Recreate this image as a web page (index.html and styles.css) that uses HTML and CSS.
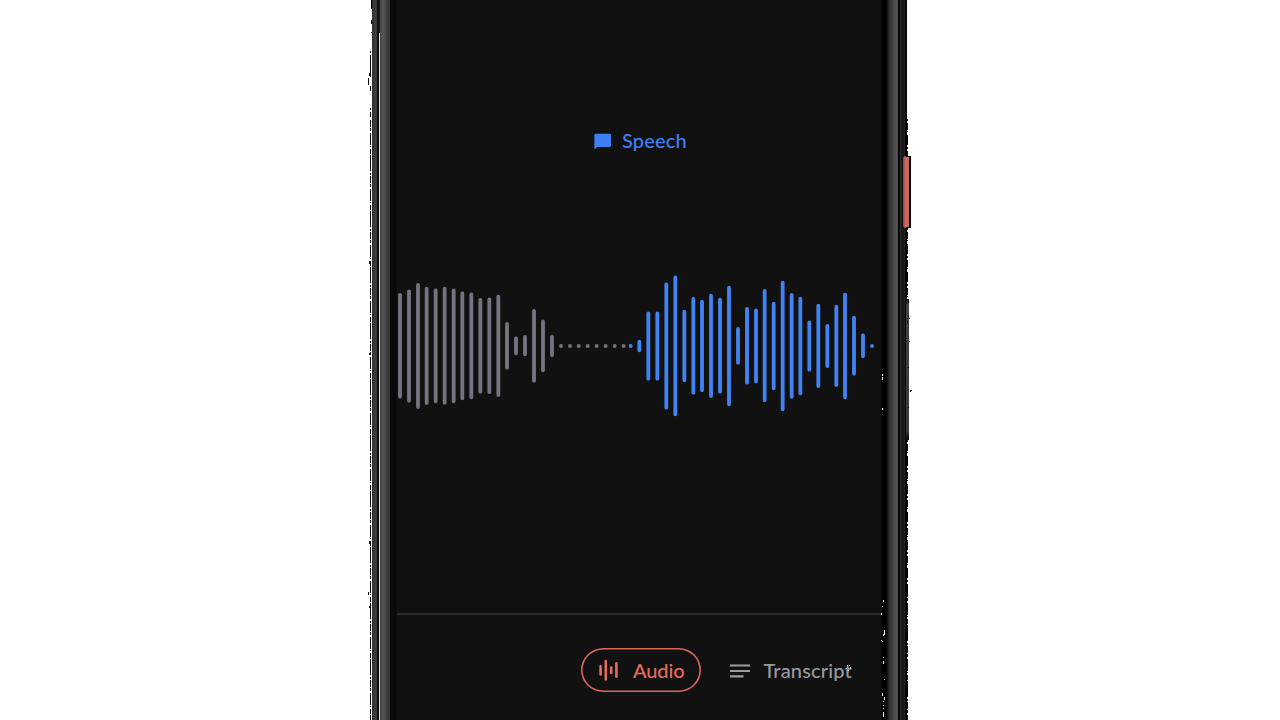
FILE: index.html
```html
<!DOCTYPE html>
<html lang="en">
<head>
<meta charset="utf-8">
<title>Recorder</title>
<link rel="stylesheet" href="styles.css">
</head>
<body>
<main class="phone">
  <div class="case case-left"></div>
  <section class="screen">
    <header class="label">
      <svg class="bubble" viewBox="0 0 18 18"><path fill="currentColor" d="M1.8.8h13.8Q17 .8 17 2.2v10.4q0 1.4-1.4 1.4H3.2L.4 16.8V2.2Q.4.8 1.8.8z"/></svg>
      <span class="label-text">Speech</span>
    </header>
    <svg class="wave" viewBox="21 0 1452 480">
      <path class="past" d="M30 90V395M57 79V407M84 60V426M110 71V414M137 76V409M164 71V413M191 76V409M217 85V400M244 88V397M271 105V380M298 103V381M325 95V390M351 177V308M378 220V265M405 216V268M432 138V347M459 169V316M486 215V271M513 243h.1M540 243h.1M566 243h.1M593 243h.1M620 243h.1M647 243h.1M674 243h.1M701 243h.1"/>
      <path class="live" d="M722 243h.1M748 230V256M775 145V341M802 145V341M829 58V428M856 37V448M883 140V346M910 102V383M936 110V376M963 92V393M990 104V380M1017 68V418M1044 192V293M1071 132V353M1098 136V349M1124 78V406M1151 116V370M1178 53V433M1205 90V395M1231 101V385M1258 172V314M1285 122V363M1312 183V303M1339 125V360M1365 89V397M1392 158V326M1419 211V274M1446 243h.1"/>
    </svg>
    <nav class="tabs">
      <button class="tab audio">
        <svg class="audio-icon" viewBox="0 0 20 22"><path d="M1.6 7.2v8.2M6.8 2v18.4M12.2 8.5v5.5M17.4 4.3v13.4"/></svg>
        <span class="tab-text">Audio</span>
      </button>
      <button class="tab transcript">
        <svg class="lines-icon" viewBox="0 0 20 14"><path d="M0 1.5h20M0 7h20M0 12.4h13.5"/></svg>
        <span class="tab-text wide">Transcript</span>
      </button>
    </nav>
  </section>
  <div class="case case-right"></div>
  <div class="power"></div>
  <div class="volume"></div>
  <svg class="grain" viewBox="0 0 560 720">
    <path class="seam" d="M19.5 0V33"/>
    <path class="dark" d="M11.5 0v9M11.5 20v4M11.5 32v1M10.5 51v2M10.5 55v22M9.5 73v3M8.5 78v7M10.5 86v5M10.5 108v2M10.5 112v5"/>
    <path class="dark dash-a" d="M10.5 120V720"/>
    <path class="dark" d="M9.5 261v3M8.5 592v3M9.5 606v2M9.5 541v3M9.5 353v2M18.5 32v3M18.5 38v2M18.5 45v2"/>
    <path class="dark dash-b" d="M547.5 119V156M547.5 228V298M547.5 440V590"/>
    <path class="dark dash-a" d="M547.5 590V720"/>
    <path class="dark" d="M546 156.5h5M550.5 157v70M546 227.5h5M548.5 299v4M547.5 321v2M549.5 318v1M549.5 341v1M548.5 367v1M550 390.5h2M550.5 391v1M548.5 407v1M548.5 436v4"/>
    <path class="light" d="M522.5 374v2M522.5 377v3M522.5 408v2M523.5 600v2M522.5 606v1M521.5 613v2M524.5 630v5M523.5 634v2M521.5 640v1M522.5 641v1M523.5 657v1M523.5 661v3M524.5 679v1M522.5 693v3M524.5 697v3M523.5 701v1M523.5 705v1M523.5 708v1M523.5 712v5M487.5 665v1M489.5 665v1M490.5 667v2M486.5 668v1M488.5 670v1"/>
  </svg>
</main>
</body>
</html>
```
FILE: styles.css
```css
body {
  margin: 0;
  background: #fff;
  font-family: Lato, "Open Sans", sans-serif;
}
.phone {
  position: relative;
  display: flex;
  width: 535px;
  height: 720px;
  margin-left: 372px;
}
.case-left {
  width: 25px;
  background: linear-gradient(90deg,
    #292a29 0, #3c3d3c 2px, #333 3px, #454645 4px, #222 5px, #080808 6px,
    #080808 7px, #ddd 7px, #ddd 8px, #414241 8px, #555655 11px,
    #444544 14px, #303130 18px, #0b0c0b 18px, #070807 24px, #0e0f0e 25px);
}
.case-right {
  width: 26px;
  background: linear-gradient(90deg,
    #0b0b0b 0, #010101 2px, #010101 5px, #151615 7px, #2b2c2b 8px,
    #3b3c3b 11px, #555655 16px, #434443 17px, #070707 17px, #070707 19px,
    #303130 19px, #292a29 20px, #111 21px, #111 22px, #242524 23px,
    #1b1c1b 24px, #050505 24px, #050505 26px);
}
.screen {
  display: flex;
  flex-direction: column;
  width: 484px;
  background: #111;
}
.label {
  display: flex;
  align-items: center;
  height: 28px;
  margin-top: 126px;
  padding-left: 197px;
  color: #3d80f5;
}
.bubble {
  width: 18px;
  height: 18px;
  margin: 4px 10px 0 0;
}
.label-text {
  font-size: 20px;
  font-weight: 500;
  line-height: 28px;
  letter-spacing: .15px;
}
.wave {
  width: 484px;
  height: 160px;
  margin-top: 111px;
}
.past, .live {
  fill: none;
  stroke-width: 11.5;
  stroke-linecap: round;
}
.past { stroke: #75737f; }
.live { stroke: #4283f2; }
.tabs {
  display: flex;
  box-sizing: border-box;
  height: 107px;
  margin-top: auto;
  padding: 34px 0 0 184px;
  border-top: 2px solid #2a2b2b;
}
.tab {
  display: flex;
  align-items: center;
  box-sizing: border-box;
  height: 44px;
  padding: 0;
  border: 0;
  background: none;
  font: 500 20px/28px Lato, "Open Sans", sans-serif;
}
.tabs { padding-top: 33px; }
.audio {
  width: 120px;
  padding-left: 0;
  color: #e66c61;
  border-radius: 22px;
  box-shadow: inset 0 0 0 1.6px #dc665c;
}
.audio-icon {
  width: 20px;
  height: 22px;
  margin: 0 14px 0 18px;
}
.audio-icon path, .lines-icon path {
  fill: none;
  stroke: currentColor;
}
.audio-icon path {
  stroke-width: 2.6;
  stroke-linecap: round;
}
.tab-text { margin-top: -1px; letter-spacing: -.1px; }
.wide { letter-spacing: .15px; }
.lines-icon path { stroke-width: 2.1; }
.transcript {
  margin-left: 28px;
  color: #9a9b9e;
}
.lines-icon {
  width: 20px;
  height: 14px;
  margin: 1px 14px 0 .5px;
}
.power {
  position: absolute;
  left: 531px;
  top: 156px;
  width: 7px;
  height: 72px;
  border-right: 1px solid #050505;
  box-sizing: border-box;
  border-radius: 3px 1px 1px 3px;
  background: linear-gradient(90deg, #92463f, #d66b60 3px, #c65f56);
}
.volume {
  position: absolute;
  left: 534px;
  top: 299px;
  width: 3px;
  height: 141px;
  background: linear-gradient(#111, #424342 6px, #393a39 132px, #080808);
}
.grain {
  position: absolute;
  left: -12px;
  top: 0;
  width: 560px;
  height: 720px;
  fill: none;
  shape-rendering: crispEdges;
}
.dark { stroke: #000; }
.light { stroke: #fff; }
.seam { stroke: #1c1d1c; }
.dash-a { stroke-dasharray: 7 1 3 2 12 1 1 2 5 1 16 2 2 1; }
.dash-b { stroke-dasharray: 2 2 7 1 1 3 10 2; }
```
